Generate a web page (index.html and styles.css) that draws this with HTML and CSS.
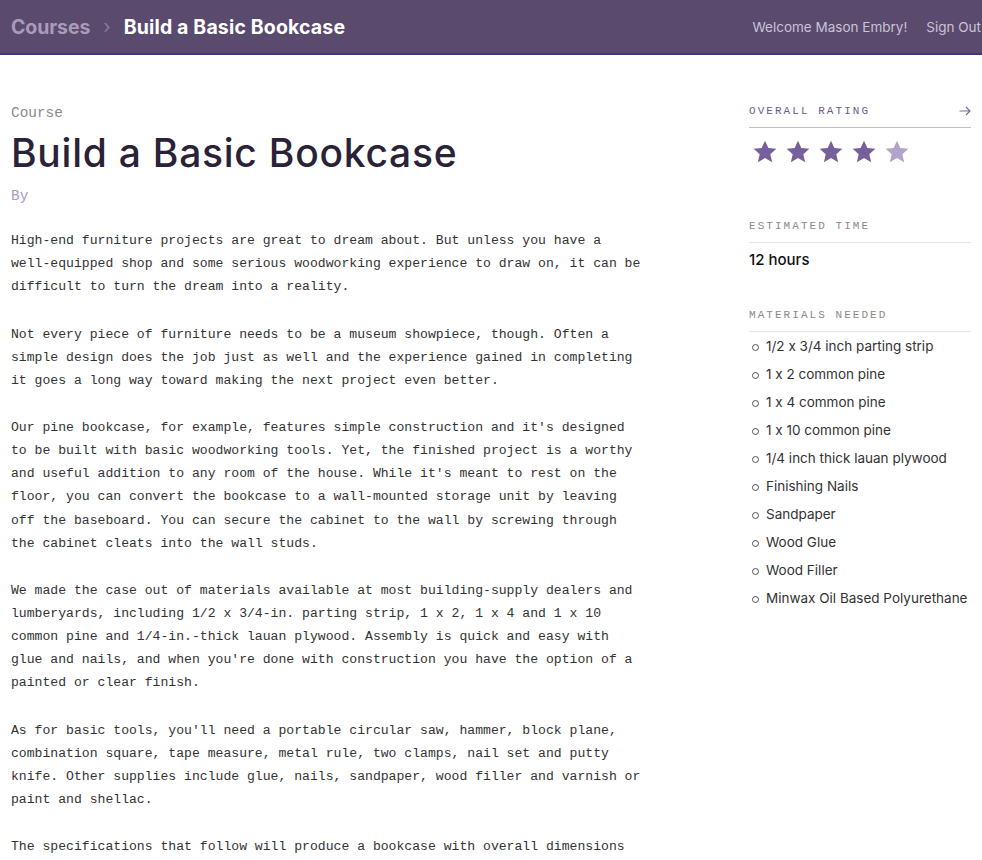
FILE: index.html
```
<!DOCTYPE html>
<html lang="en">
<head>
<meta charset="utf-8">
<title>Build a Basic Bookcase</title>
<link rel="stylesheet" href="styles.css">
</head>
<body>
<header class="topbar">
  <nav class="crumbs">
    <a class="crumb-link" href="#">Courses</a>
    <span class="crumb-sep">&rsaquo;</span>
    <span class="crumb-current">Build a Basic Bookcase</span>
  </nav>
  <div class="user">
    <span class="welcome">Welcome Mason Embry!</span>
    <a class="signout" href="#">Sign Out</a>
  </div>
</header>
<div class="page">
  <main class="main">
    <div class="kicker">Course</div>
    <h1 class="title">Build a Basic Bookcase</h1>
    <div class="byline">By</div>
    <div class="body">
      <p>High-end furniture projects are great to dream about. But unless you have a well-equipped shop and some serious woodworking experience to draw on, it can be difficult to turn the dream into a reality.</p>
      <p>Not every piece of furniture needs to be a museum showpiece, though. Often a simple design does the job just as well and the experience gained in completing it goes a long way toward making the next project even better.</p>
      <p>Our pine bookcase, for example, features simple construction and it's designed to be built with basic woodworking tools. Yet, the finished project is a worthy and useful addition to any room of the house. While it's meant to rest on the floor, you can convert the bookcase to a wall-mounted storage unit by leaving off the baseboard. You can secure the cabinet to the wall by screwing through the cabinet cleats into the wall studs.</p>
      <p>We made the case out of materials available at most building-supply dealers and lumberyards, including 1/2 x 3/4-in. parting strip, 1 x 2, 1 x 4 and 1 x 10 common pine and 1/4-in.-thick lauan plywood. Assembly is quick and easy with glue and nails, and when you're done with construction you have the option of a painted or clear finish.</p>
      <p>As for basic tools, you'll need a portable circular saw, hammer, block plane, combination square, tape measure, metal rule, two clamps, nail set and putty knife. Other supplies include glue, nails, sandpaper, wood filler and varnish or paint and shellac.</p>
      <p>The specifications that follow will produce a bookcase with overall dimensions of 10-3/4 in. deep x 34-3/4 in. wide x 48 in. tall. While the depth of the case should remain the same, you can easily adjust the width and height.</p>
    </div>
  </main>
  <aside class="side">
    <section class="box">
      <h3 class="box-head purple">
        <span>Overall Rating</span>
        <svg class="arrow" width="12" height="10" viewBox="0 0 12 10"><path d="M0.5 5H11M7 1l4 4-4 4" fill="none" stroke="#7a69a0" stroke-width="1.1"/></svg>
      </h3>
      <div class="stars">
        <svg class="star on" viewBox="0 0 24 24"><path d="M12 1.5l3.1 6.9 7.4.7-5.6 5 1.7 7.3L12 17.6l-6.6 3.8 1.7-7.3-5.6-5 7.4-.7z"/></svg>
        <svg class="star on" viewBox="0 0 24 24"><path d="M12 1.5l3.1 6.9 7.4.7-5.6 5 1.7 7.3L12 17.6l-6.6 3.8 1.7-7.3-5.6-5 7.4-.7z"/></svg>
        <svg class="star on" viewBox="0 0 24 24"><path d="M12 1.5l3.1 6.9 7.4.7-5.6 5 1.7 7.3L12 17.6l-6.6 3.8 1.7-7.3-5.6-5 7.4-.7z"/></svg>
        <svg class="star on" viewBox="0 0 24 24"><path d="M12 1.5l3.1 6.9 7.4.7-5.6 5 1.7 7.3L12 17.6l-6.6 3.8 1.7-7.3-5.6-5 7.4-.7z"/></svg>
        <svg class="star off" viewBox="0 0 24 24"><path d="M12 1.5l3.1 6.9 7.4.7-5.6 5 1.7 7.3L12 17.6l-6.6 3.8 1.7-7.3-5.6-5 7.4-.7z"/></svg>
      </div>
    </section>
    <section class="box">
      <h3 class="box-head gray">Estimated Time</h3>
      <div class="time">12 hours</div>
    </section>
    <section class="box">
      <h3 class="box-head gray">Materials Needed</h3>
      <ul class="materials">
        <li>1/2 x 3/4 inch parting strip</li>
        <li>1 x 2 common pine</li>
        <li>1 x 4 common pine</li>
        <li>1 x 10 common pine</li>
        <li>1/4 inch thick lauan plywood</li>
        <li>Finishing Nails</li>
        <li>Sandpaper</li>
        <li>Wood Glue</li>
        <li>Wood Filler</li>
        <li>Minwax Oil Based Polyurethane</li>
      </ul>
    </section>
  </aside>
</div>
</body>
</html>
```
FILE: styles.css
```
* { box-sizing: border-box; }
html, body { margin: 0; padding: 0; background: #fff; }
body { font-family: Inter, "Open Sans", sans-serif; color: #2b2340; font-feature-settings: "calt" 0; }

.topbar {
  height: 55px;
  background: #5a4a6e;
  border-bottom: 2px solid #4b2f7a;
  display: flex;
  align-items: center;
  justify-content: space-between;
  padding: 0 0 0 11px;
  white-space: nowrap;
  overflow: hidden;
}
.crumbs { display: flex; align-items: center; font-weight: 700; font-size: 19.5px; letter-spacing: 0.15px; }
.crumb-link { color: #a89cb8; text-decoration: none; letter-spacing: -0.1px; }
.crumb-sep { color: #8b7ca0; font-weight: 400; font-size: 19px; margin: 0 13px 0 13px; }
.crumb-current { color: #fff; }
.user { display: flex; align-items: center; font-size: 13.5px; color: #cbc2d6; margin-right: 1px; }
.welcome { margin-right: 19px; }
.signout { color: #cbc2d6; text-decoration: none; }

.page { display: flex; align-items: flex-start; padding: 48px 11px 0 11px; }
.main { width: 633px; flex: none; }
.side { width: 222px; margin-left: auto; }

.kicker { font-family: "Liberation Mono", monospace; font-size: 14.4px; line-height: 20px; color: #8a8a8a; }
.title { font-size: 39px; line-height: 46px; font-weight: 500; color: #2a2238; margin: 7px 0 0 0; letter-spacing: 0.75px; }
.byline { font-family: "Liberation Mono", monospace; font-size: 14.4px; line-height: 20px; color: #a99cc4; margin-top: 10px; }
.body { margin-top: 23px; font-family: "Liberation Mono", monospace; font-size: 13.12px; line-height: 23.1px; color: #333; }
.body p { margin: 0 0 24.3px 0; }

.box-head {
  margin: 0;
  font-family: "Liberation Mono", monospace;
  font-weight: 400;
  font-size: 11px;
  letter-spacing: 2.05px;
  text-transform: uppercase;
  line-height: 16px;
  padding-bottom: 8px;
  border-bottom: 1px solid #e6e6e6;
  display: flex;
  justify-content: space-between;
  align-items: center;
}
.box-head.purple { color: #6d5c8e; border-bottom-color: #c6bbdb; }
.box-head.gray { color: #8a8a8a; }

.stars { display: flex; gap: 7px; margin: 11px 0 53px 3px; height: 26px; }
.star { width: 26px; height: 26px; }
.star.on { fill: #775f9c; }
.star.off { fill: #b1a3c9; }

.time { font-size: 15px; font-weight: 500; color: #111; line-height: 20px; margin-top: 7px; margin-bottom: 37px; }

.materials { list-style: none; margin: 4px 0 0 0; padding: 0; font-family: Inter, sans-serif; font-size: 13.5px; color: #333; }
.materials li { line-height: 20px; margin-bottom: 8px; padding-left: 17px; position: relative; }
.materials li::before {
  content: "";
  position: absolute;
  left: 3px;
  top: 8px;
  width: 5px;
  height: 5px;
  border: 1px solid #555;
  border-radius: 50%;
}
```
